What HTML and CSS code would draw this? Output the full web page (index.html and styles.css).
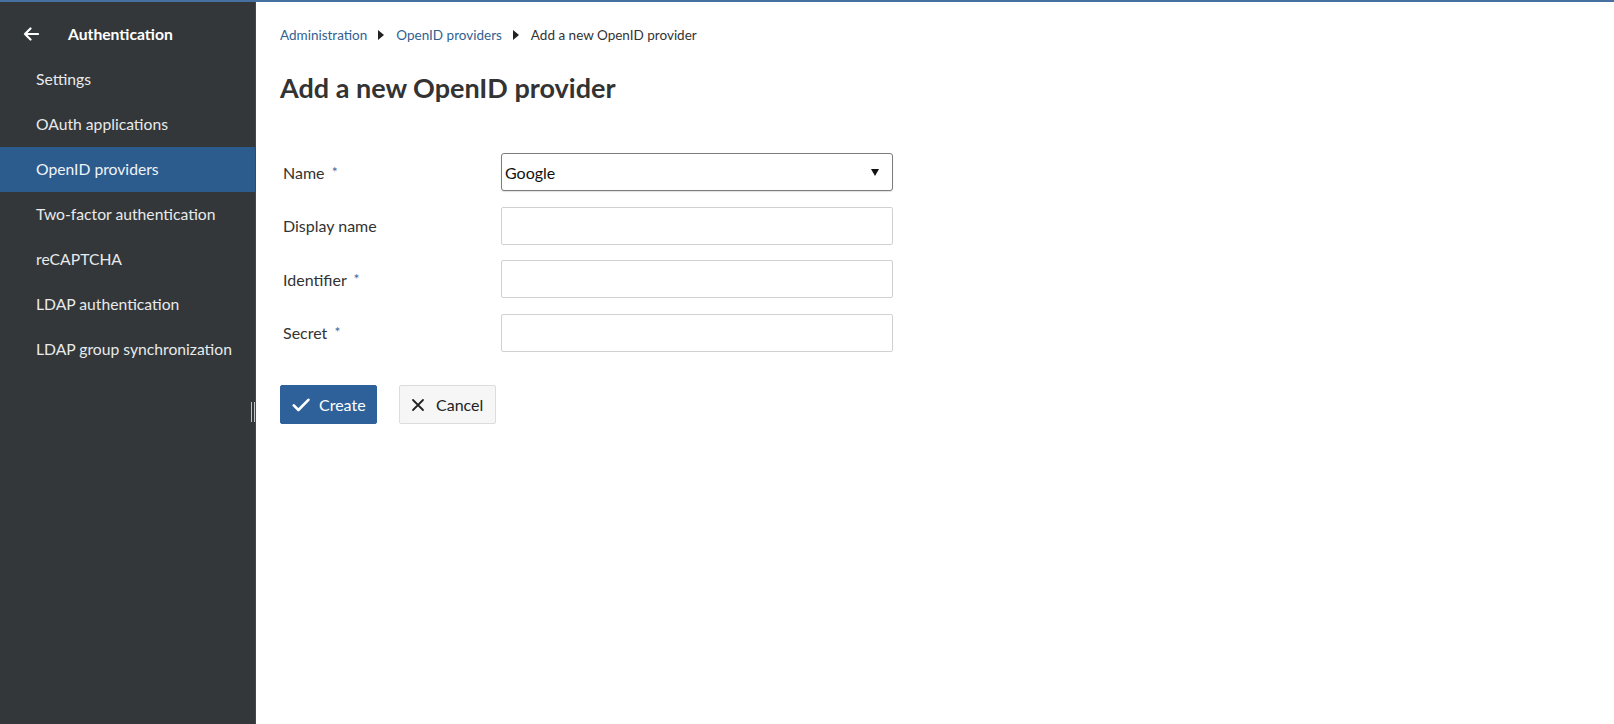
FILE: index.html
```html
<!DOCTYPE html>
<html lang="en">
<head>
<meta charset="utf-8">
<title>Add a new OpenID provider</title>
<link rel="stylesheet" href="styles.css">
</head>
<body>
<div class="app">
  <aside class="sidebar">
    <div class="side-header">
      <svg class="back" width="16" height="14" viewBox="0 0 16 14"><path d="M15 7H2M7.5 1.5L2 7l5.5 5.5" fill="none" stroke="#fff" stroke-width="2.2" stroke-linecap="round" stroke-linejoin="round"/></svg>
      <span class="side-title">Authentication</span>
    </div>
    <nav class="menu">
      <div class="item">Settings</div>
      <div class="item">OAuth applications</div>
      <div class="item active">OpenID providers</div>
      <div class="item">Two-factor authentication</div>
      <div class="item">reCAPTCHA</div>
      <div class="item">LDAP authentication</div>
      <div class="item">LDAP group synchronization</div>
    </nav>
    <div class="resizer"></div>
  </aside>
  <main class="content">
    <div class="breadcrumb">
      <a class="crumb">Administration</a>
      <span class="sep"></span>
      <a class="crumb">OpenID providers</a>
      <span class="sep"></span>
      <span class="current">Add a new OpenID provider</span>
    </div>
    <h1 class="title">Add a new OpenID provider</h1>
    <form class="form">
      <div class="row">
        <label class="label">Name <span class="req">*</span></label>
        <div class="select">
          <span>Google</span>
          <span class="caret"></span>
        </div>
      </div>
      <div class="row">
        <label class="label">Display name</label>
        <div class="input"></div>
      </div>
      <div class="row">
        <label class="label">Identifier <span class="req">*</span></label>
        <div class="input"></div>
      </div>
      <div class="row">
        <label class="label">Secret <span class="req">*</span></label>
        <div class="input"></div>
      </div>
      <div class="actions">
        <button type="button" class="btn primary">
          <svg width="18" height="14" viewBox="0 0 18 14"><path d="M1.8 7.4l4.6 4.6L16.4 1.8" fill="none" stroke="#fff" stroke-width="2.6" stroke-linecap="round" stroke-linejoin="round"/></svg>
          Create
        </button>
        <button type="button" class="btn secondary">
          <svg width="14" height="14" viewBox="0 0 14 14"><path d="M2 2l10 10M12 2L2 12" fill="none" stroke="#222" stroke-width="1.8" stroke-linecap="round"/></svg>
          Cancel
        </button>
      </div>
    </form>
  </main>
</div>
</body>
</html>
```
FILE: styles.css
```css
* { box-sizing: border-box; }
html, body { margin: 0; padding: 0; }
body {
  font-family: Lato, "Open Sans", sans-serif;
  color: #333;
  background: #fff;
  border-top: 2px solid #46709f;
  height: 724px;
  overflow: hidden;
}
.app {
  display: flex;
  height: 722px;
}
.sidebar {
  position: relative;
  width: 256px;
  flex: 0 0 256px;
  background: #333739;
  color: #e9ecef;
  border-right: 1px solid #44484b;
}
.side-header {
  display: flex;
  align-items: center;
  height: 44px;
  margin-top: 10px;
  margin-bottom: 1px;
  padding-left: 23px;
}
.back { flex: 0 0 auto; }
.side-title {
  margin-left: 29px;
  font-size: 15.7px;
  font-weight: 700;
  color: #fff;
}
.menu { display: flex; flex-direction: column; }
.item {
  height: 45px;
  line-height: 44px;
  padding-left: 36px;
  font-size: 15.7px;
  color: #e8eaec;
  white-space: nowrap;
}
.item.active { background: #2c5b8e; color: #f0f4f8; }
.resizer {
  position: absolute;
  left: 251px;
  top: 400px;
  width: 4px;
  height: 20px;
  border-left: 1px solid #bfc2c4;
  border-right: 1px solid #bfc2c4;
}
.content {
  flex: 1;
  padding: 23px 24px 0 24px;
}
.breadcrumb {
  display: flex;
  align-items: center;
  height: 20px;
  font-size: 13.5px;
}
.crumb { color: #335f8f; }
.current { color: #333; }
.sep {
  width: 0; height: 0;
  border-top: 5px solid transparent;
  border-bottom: 5px solid transparent;
  border-left: 6px solid #222;
  margin: 0 12px 0 11px;
}
.title {
  margin: 27px 0 0 0;
  font-size: 27px;
  line-height: 32px;
  font-weight: 700;
  color: #333;
}
.form {
  margin-top: 49px;
  display: flex;
  flex-direction: column;
  gap: 15.5px;
}
.row {
  display: flex;
  align-items: center;
}
.label {
  width: 221px;
  padding-left: 3px;
  font-size: 16px;
  color: #333;
}
.req {
  color: #3d6aa0;
  font-size: 14px;
  margin-left: 3px;
  position: relative;
  top: -2px;
}
.input, .select {
  width: 392px;
  height: 38px;
  border: 1px solid #cfd1d3;
  border-radius: 2px;
  background: #fff;
}
.select {
  display: flex;
  align-items: center;
  justify-content: space-between;
  padding: 0 13px 0 3px;
  border: 1px solid #7a7c7e;
  border-radius: 3px;
  box-shadow: 0 1px 1px rgba(0,0,0,0.12);
  font-size: 16px;
  color: #111;
}
.caret {
  width: 0; height: 0;
  border-left: 4px solid transparent;
  border-right: 4px solid transparent;
  border-top: 7px solid #111;
}
.actions {
  display: flex;
  gap: 22px;
  margin-top: 18px;
}
.btn {
  display: flex;
  align-items: center;
  gap: 9px;
  height: 39px;
  width: 97px;
  padding: 0 0 0 11px;
  font-family: Lato, "Open Sans", sans-serif;
  font-size: 16px;
  border-radius: 2px;
  cursor: pointer;
}
.btn.primary {
  background: #2e619a;
  border: 1px solid #2e619a;
  color: #fff;
}
.btn.secondary {
  background: #f6f6f6;
  border: 1px solid #dcdcdc;
  color: #222;
  gap: 11px;
}
```
